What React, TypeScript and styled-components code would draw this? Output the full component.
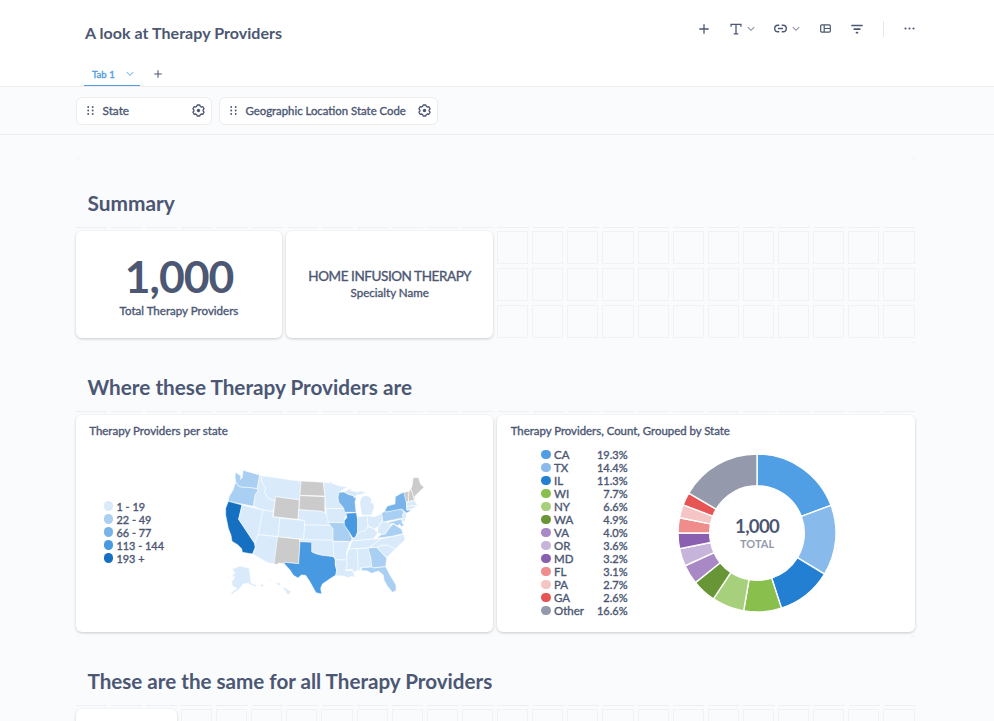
import React from 'react';
import styled, { createGlobalStyle, css } from 'styled-components';

const ink = '#4c5773';
const brand = '#509ee3';
const line = '#eeecec';
const canvas = '#f9fbfd';

const GlobalStyle = createGlobalStyle`
  * { box-sizing: border-box; }
  body {
    margin: 0;
    background: ${canvas};
    color: ${ink};
    font-family: Lato, sans-serif;
    font-weight: 700;
    overflow: hidden;
  }
  svg { display: block; flex: none; }
`;

/* Medium weight for small labels, between Lato Regular and Lato Bold. */
const medium = css`
  font-weight: 400;
  -webkit-text-stroke: 0.36px currentColor;
`;

const Page = styled.div`
  width: 994px;
  height: 721px;
  overflow: hidden;
`;

const Header = styled.header`
  height: 87px;
  padding: 0 69px 0 84px;
  background: #fff;
  border-bottom: 1px solid ${line};
  display: flex;
  flex-direction: column;
  justify-content: space-between;
`;

const TitleBar = styled.div`
  display: flex;
  justify-content: space-between;
  padding-top: 18px;
`;

const Title = styled.h1`
  margin: 4px 0 0 1px;
  font-size: 16px;
  letter-spacing: 0.04px;
  line-height: 21px;
`;

const Toolbar = styled.div`
  display: flex;
  align-items: center;
  height: 21px;
`;

const ToolButton = styled.button<{ $width: number }>`
  display: flex;
  align-items: center;
  justify-content: center;
  gap: 5px;
  width: ${(p) => p.$width}px;
  height: 21px;
  padding: 0;
  border: 0;
  background: none;
  color: ${ink};
`;

const Divider = styled.div`
  width: 1px;
  height: 16px;
  background: #e6e6e9;
  margin: 0 9px 0 15px;
`;

const Tabs = styled.nav`
  display: flex;
  height: 23px;
`;

const Tab = styled.div`
  display: flex;
  justify-content: space-between;
  align-items: center;
  width: 56px;
  padding: 0 6px 0 8px;
  border-bottom: 1px solid ${brand};
  color: ${brand};
  font-size: 9.6px;
  ${medium}
`;

const AddTab = styled.div`
  display: flex;
  align-items: center;
  height: 21px;
  margin-left: 13.5px;
`;

const Filters = styled.div`
  display: flex;
  gap: 7px;
  height: 48px;
  padding: 10px 76px;
  border-bottom: 1px solid ${line};
`;

const FilterPill = styled.div<{ $width: number }>`
  display: flex;
  align-items: center;
  width: ${(p) => p.$width}px;
  height: 28px;
  padding: 0 6px 1px 9.5px;
  border: 1px solid ${line};
  border-radius: 6px;
  background: #fff;
`;

const FilterName = styled.span<{ $size: number }>`
  flex: 1;
  margin-left: 9px;
  font-size: ${(p) => p.$size}px;
  line-height: 16px;
  white-space: nowrap;
  ${medium}
`;

const Board = styled.main`
  display: grid;
  grid-template-columns: repeat(24, 31.125px);
  grid-auto-rows: 32.75px;
  gap: 4px;
  margin: 22.9px 0 0 75.6px;
`;

const Cell = styled.div`
  border: 1px solid #f1f2f4;
`;

const Heading = styled.h2<{ $size: number }>`
  grid-column: 1 / span 24;
  grid-row-end: span 2;
  margin: 0 0 -1px;
  padding: 31.4px 0 0 11.9px;
  font-size: ${(p) => p.$size}px;
  line-height: 28px;
  background:
    repeating-linear-gradient(90deg, #eff0f3 0 31.125px, transparent 31.125px 35.125px) 0 100% / 100% 1px no-repeat,
    linear-gradient(#f3f4f6, #f3f4f6) 0 0 / 4px 1px no-repeat,
    linear-gradient(#f3f4f6, #f3f4f6) 100% 0 / 4px 1px no-repeat;
`;

const Card = styled.section<{ $cols: number; $rows: number }>`
  grid-column-end: span ${(p) => p.$cols};
  grid-row-end: span ${(p) => p.$rows};
  background: #fff;
  border-radius: 6px;
  box-shadow: 0 1px 3px rgba(0, 0, 0, 0.2);
  min-width: 0;
`;

const Metric = styled(Card)`
  display: flex;
  flex-direction: column;
  align-items: center;
  padding-top: 21px;
`;

const BigNumber = styled.div`
  font-size: 44.5px;
  letter-spacing: -1.05px;
  line-height: 48px;
`;

const Value = styled.div`
  padding-top: 15px;
  font-size: 13.5px;
  letter-spacing: -0.43px;
  line-height: 19px;
  ${medium}
`;

const Label = styled.div<{ $top: number }>`
  padding-top: ${(p) => p.$top}px;
  font-size: 11.55px;
  line-height: 14px;
  ${medium}
`;

const CardTitle = styled.h3<{ $size: number }>`
  margin: 0;
  padding: 8.5px 13.6px 0;
  font-size: ${(p) => p.$size}px;
  line-height: 14px;
  ${medium}
`;

const ChartRow = styled.div`
  display: flex;
  align-items: flex-start;
`;

const MapLegend = styled.ul`
  list-style: none;
  margin: 0;
  padding: 62.5px 0 0 28.4px;
  width: 139.4px;
`;

const PieLegend = styled.ul`
  list-style: none;
  margin: 0;
  padding: 10.8px 0 0 44.4px;
  width: 172px;
`;

const LegendItem = styled.li<{ $size: number }>`
  display: flex;
  align-items: center;
  height: 13px;
  gap: 3px;
  font-size: ${(p) => p.$size}px;
  line-height: 13px;
  ${medium}
`;

const Dot = styled.span<{ $color: string }>`
  width: 9.5px;
  height: 9.5px;
  margin-top: -1px;
  border-radius: 50%;
  background: ${(p) => p.$color};
`;

const Percent = styled.span`
  flex: 1;
  padding-right: 41.5px;
  text-align: right;
  font-size: 11.05px;
`;

const MapSvg = styled.svg`
  margin-top: 22.35px;
`;

const PieSvg = styled.svg`
  margin: 15px 0 0 8.2px;
`;

const Chevron = ({ color = '#8a92a5' }: { color?: string }) => (
  <svg width="8" height="6" viewBox="0 0 8 6" fill="none" stroke={color} strokeWidth="1.1">
    <path d="M.8 1.1 4 4.3 7.2 1.1" />
  </svg>
);

const Plus = ({ size }: { size: number }) => (
  <svg width={size} height={size} viewBox="0 0 10 10" fill="none" stroke={ink} strokeWidth="1.3">
    <path d="M5 .3v9.4M.3 5h9.4" />
  </svg>
);

const Grip = () => (
  <svg width="7" height="9" viewBox="0 0 7 9" fill={ink}>
    {[1, 4.5, 8].map((y) => (
      <g key={y}>
        <circle cx="1.2" cy={y} r=".95" />
        <circle cx="5.7" cy={y} r=".95" />
      </g>
    ))}
  </svg>
);

const Gear = () => (
  <svg width="13" height="13" viewBox="0 0 13 13" fill="none" stroke={ink}>
    <path
      strokeWidth="1.3"
      strokeLinejoin="round"
      d="M5.2 1h2.600l.5 1.400 1.100.6 1.500-.3 1.200 2.200-1 1.100v1l1 1.100-1.200 2.200-1.500-.3-1.100.6-.5 1.400H5.200l-.5-1.400-1.100-.6-1.500.3L.9 8.100l1-1.100V6l-1-1.100 1.200-2.200 1.500.3 1.100-.6z"
    />
    <circle cx="6.500" cy="6.500" r="1.700" fill={ink} stroke="none" />
  </svg>
);

type State = [fill: string, points: string];
const c1 = '#d9eafb';
const c2 = '#a9cff3';
const c3 = '#78b3ea';
const c4 = '#4799e2';
const c5 = '#1670c1';
const none = '#cbcbcb';

const states: State[] = [
  [c2, '62,37 78,48 76,59 82,52 84,31 134,45 127,86 97,82 80,82 70,78 62,66 60,50'],
  [c2, '62,66 70,78 80,82 97,82 127,86 129,92 121,104 115,139 40,124 42,110 54,90'],
  [c5, '40,124 81,135 71,178 119,250 121,262 113,282 82,277 80,266 68,254 51,244 48,226 40,205 36,185 32,165 32,145'],
  [c1, '81,135 144,150 130,224 125,236 119,250 71,178'],
  [c1, '134,45 141,47 139,62 152,84 149,98 160,115 180,122 175,155 144,150 115,139 121,104 129,92 127,86'],
  [c1, '141,47 258,64 255,120 182,110 180,122 160,115 149,98 152,84 139,62'],
  [none, '182,110 253,120 249,178 175,170'],
  [c1, '144,150 175,155 173,170 195,174 189,230 130,224'],
  [c1, '130,224 189,230 178,312 158,308 113,282 121,262 119,250 125,236'],
  [none, '188,230 255,238 251,311 208,307 208,311 190,309 188,313 177,312'],
  [c1, '195,174 269,182 266,238 189,230'],
  [none, '258,63 325,67 330,108 255,106'],
  [none, '255,107 330,110 329,140 330,158 318,154 252,149'],
  [c1, '252,149 318,154 331,158 338,172 343,189 347,196 269,195 269,182 249,178'],
  [c1, '269,195 347,196 354,207 354,241 266,239'],
  [c1, '255,238 354,241 357,262 357,291 340,288 320,286 290,276 290,247 255,245'],
  [c4, '255,245 290,247 290,276 305,282 320,286 340,288 357,291 361,300 361,315 365,330 363,345 345,356 322,372 317,385 320,402 303,398 294,382 283,362 272,346 259,345 249,354 235,346 225,330 208,311 208,307 251,311'],
  [c1, '325,67 345,69 346,60 350,70 375,78 398,81 380,91 372,97 369,112 371,126 389,146 332,146 330,110'],
  [c1, '332,146 387,146 396,160 391,172 386,188 340,188 335,165'],
  [c2, '340,188 386,188 392,200 402,215 411,236 406,247 398,247 398,244 354,244 354,207'],
  [c1, '354,244 405,245 401,258 394,278 395,300 361,299 357,290'],
  [c1, '361,299 395,300 397,315 392,332 412,332 416,340 420,352 408,349 400,353 385,348 362,347 365,330 361,315'],
  [c3, '372,97 388,96 400,103 416,107 418,113 424,112 420,125 423,157 389,157 386,144 371,126 369,112'],
  [c4, '393,160 424,158 428,180 428,215 420,236 412,232 402,215 388,195 388,182 396,172'],
  [c1, '388,96 397,90 408,83 406,91 425,96 440,93 453,98 440,103 425,105 418,112 416,107 400,103'],
  [c1, '440,166 437,145 434,128 438,115 446,107 460,108 470,117 468,130 475,128 478,140 472,157 470,165'],
  [c1, '428,170 457,167 459,198 450,212 428,222'],
  [c1, '457,167 480,170 500,160 502,180 490,200 478,207 459,198'],
  [c1, '412,238 422,230 428,218 450,212 460,200 478,207 488,218 476,236 412,243'],
  [c1, '410,246 412,243 476,237 498,236 478,252 462,263 402,267'],
  [c1, '402,267 427,266 430,332 414,335 412,328 392,330 397,314 395,300 397,278'],
  [c1, '427,266 459,264 468,295 470,320 437,323 437,332 430,332'],
  [c2, '459,264 485,262 497,275 515,295 512,320 475,323 470,320 468,295'],
  [c2, '440,323 470,321 475,324 512,320 525,345 543,375 543,392 532,397 517,378 507,360 505,345 490,333 470,340 455,332 440,332'],
  [c1, '485,262 503,255 520,256 540,268 515,293 497,275'],
  [c1, '498,236 567,223 570,240 553,255 540,268 520,256 503,255 485,262 462,263 478,252'],
  [c2, '486,235 500,223 510,222 522,205 535,192 548,200 560,208 564,221 530,229'],
  [c1, '490,200 502,183 515,187 532,188 522,205 510,222 500,223 487,218'],
  [c2, '500,160 510,152 512,156 558,146 567,156 562,168 567,173 504,186'],
  [c2, '518,188 560,177 562,190 568,194 560,200 553,192 548,198 535,190 522,192'],
  [c1, '560,148 574,154 573,172 567,188 560,178 567,173 562,168 567,156'],
  [c3, '510,151 517,138 540,132 541,110 562,98 568,97 574,120 575,150 590,151 575,159 560,147 512,156'],
  [none, '566,97 583,94 580,110 581,125 574,126'],
  [none, '583,94 588,86 599,120 581,125 580,110'],
  [none, '588,86 592,74 594,55 602,52 611,53 616,72 627,82 612,96 600,108 598,118'],
  [c1, '575,127 598,121 603,130 609,133 600,137 575,138'],
  [c1, '575,138 600,137 600,143 577,151'],
  [c1, '52,327 75,318 103,325 108,368 124,376 123,381 98,370 85,372 72,388 52,402 45,401 66,385 52,378 50,365 60,350 48,350 60,338'],
  [c1, '203,384 208,382 229,395 220,404 216,403 212,393'],
  [c1, '183,368 194,369 198,375 190,376'],
  [c1, '163,359 168,360 166,364 162,363'],
  [c1, '133,374 143,373 147,379 140,380'],
  [c1, '38,352 44,350 43,354 37,354'],
];

const MapChart = () => (
  <MapSvg width="220" height="145" viewBox="0 0 660 435" stroke="#fff" strokeWidth="1.6" strokeLinejoin="round">
    {states.map(([fill, points]) => (
      <polygon key={points} fill={fill} points={points} />
    ))}
  </MapSvg>
);

const slices: [string, number, string][] = [
  ['CA', 19.3, '#509ee3'],
  ['TX', 14.4, '#88bbeb'],
  ['IL', 11.3, '#227fd2'],
  ['WI', 7.7, '#88bf4d'],
  ['NY', 6.6, '#a7d07c'],
  ['WA', 4.9, '#689636'],
  ['VA', 4.0, '#a989c5'],
  ['OR', 3.6, '#c7b4db'],
  ['MD', 3.2, '#8a5eb0'],
  ['FL', 3.1, '#ef8c8c'],
  ['PA', 2.7, '#f5c4c4'],
  ['GA', 2.6, '#e75454'],
  ['Other', 16.6, '#949aab'],
];

const total = slices.reduce((sum, s) => sum + s[1], 0);
const polar = (r: number, t: number) =>
  `${(80 + r * Math.sin(t * 2 * Math.PI)).toFixed(2)} ${(80 - r * Math.cos(t * 2 * Math.PI)).toFixed(2)}`;

const PieTotal = styled.text`
  font-size: 18.6px;
  letter-spacing: -0.7px;
  text-anchor: middle;
  fill: ${ink};
`;

const PieCaption = styled.text`
  font-size: 11px;
  text-anchor: middle;
  fill: #949aab;
`;

const PieChart = () => {
  let at = 0;
  return (
    <PieSvg width="160" height="160" viewBox="0 0 160 160">
      {slices.map(([name, value, color]) => {
        const from = at / total;
        at += value;
        const to = at / total;
        return (
          <path
            key={name}
            fill={color}
            stroke="#fff"
            strokeWidth="1.4"
            d={`M${polar(79, from)}A79 79 0 0 1 ${polar(79, to)}L${polar(47.3, to)}A47.3 47.3 0 0 0 ${polar(47.3, from)}Z`}
          />
        );
      })}
      <PieTotal x="80.1" y="79.8">1,000</PieTotal>
      <PieCaption x="80.1" y="94.9">TOTAL</PieCaption>
    </PieSvg>
  );
};

const buckets: [string, string][] = [
  ['1 - 19', c1],
  ['22 - 49', c2],
  ['66 - 77', c3],
  ['113 - 144', c4],
  ['193 +', c5],
];

const cells = (count: number, prefix: string) =>
  Array.from({ length: count }, (_, i) => <Cell key={prefix + i} />);

export default function App() {
  return (
    <Page>
      <GlobalStyle />
      <Header>
        <TitleBar>
          <Title>A look at Therapy Providers</Title>
          <Toolbar>
            <ToolButton $width={24} aria-label="Add question"><Plus size={10} /></ToolButton>
            <ToolButton $width={53} aria-label="Add text">
              <svg width="12" height="12" viewBox="0 0 12 12" fill="none" stroke={ink} strokeWidth="1.3">
                <path d="M1.1 3.700V1.300h9.800v2.400M6 1.300v9.500M3.800 10.900h4.400" />
              </svg>
              <Chevron />
            </ToolButton>
            <ToolButton $width={35} aria-label="Add link">
              <svg width="13" height="9" viewBox="0 0 13 9" fill="none" stroke={ink} strokeWidth="1.4">
                <path d="M5.300 1.200H4a3.300 3.300 0 0 0 0 6.600h1.300M7.700 1.200H9a3.300 3.300 0 0 1 0 6.600H7.700M4 4.500h5" />
              </svg>
              <Chevron />
            </ToolButton>
            <ToolButton $width={42} aria-label="Add section">
              <svg width="11" height="9" viewBox="0 0 11 9" fill="none" stroke={ink} strokeWidth="1.2">
                <rect x=".7" y=".9" width="9.600" height="7.200" rx="1" />
                <path d="M4.200 1v7M4.200 4.500h6" />
              </svg>
            </ToolButton>
            <ToolButton $width={22} aria-label="Add filter">
              <svg width="12" height="10" viewBox="0 0 12 10" fill="none" stroke={ink} strokeWidth="1.700" strokeLinecap="round">
                <path d="M1 1.500h10M3.200 5.100h5.600M5.500 8.700h1" />
              </svg>
            </ToolButton>
            <Divider />
            <ToolButton $width={32} aria-label="More">
              <svg width="11" height="3" viewBox="0 0 11 3" fill={ink}>
                <circle cx="1.500" cy="1.500" r="1.050" />
                <circle cx="5.500" cy="1.500" r="1.050" />
                <circle cx="9.500" cy="1.500" r="1.050" />
              </svg>
            </ToolButton>
          </Toolbar>
        </TitleBar>
        <Tabs>
          <Tab>Tab 1<Chevron color="#86bdec" /></Tab>
          <AddTab><Plus size={8} /></AddTab>
        </Tabs>
      </Header>
      <Filters>
        <FilterPill $width={136}><Grip /><FilterName $size={11.8}>State</FilterName><Gear /></FilterPill>
        <FilterPill $width={219}><Grip /><FilterName $size={11.36}>Geographic Location State Code</FilterName><Gear /></FilterPill>
      </Filters>
      <Board>
        <Heading $size={20.85}>Summary</Heading>
        <Metric $cols={6} $rows={3}>
          <BigNumber>1,000</BigNumber>
          <Label $top={4}>Total Therapy Providers</Label>
        </Metric>
        <Metric $cols={6} $rows={3}>
          <Value>HOME INFUSION THERAPY</Value>
          <Label $top={0}>Specialty Name</Label>
        </Metric>
        {cells(36, 'summary')}
        <Heading $size={20.72}>Where these Therapy Providers are</Heading>
        <Card $cols={12} $rows={6}>
          <CardTitle $size={11.5}>Therapy Providers per state</CardTitle>
          <ChartRow>
            <MapLegend>
              {buckets.map(([label, color]) => (
                <LegendItem key={label} $size={10.9}><Dot $color={color} />{label}</LegendItem>
              ))}
            </MapLegend>
            <MapChart />
          </ChartRow>
        </Card>
        <Card $cols={12} $rows={6}>
          <CardTitle $size={11.4}>Therapy Providers, Count, Grouped by State</CardTitle>
          <ChartRow>
            <PieLegend>
              {slices.map(([name, value, color]) => (
                <LegendItem key={name} $size={11.5}>
                  <Dot $color={color} />{name}<Percent>{value.toFixed(1)}%</Percent>
                </LegendItem>
              ))}
            </PieLegend>
            <PieChart />
          </ChartRow>
        </Card>
        <Heading $size={20.62}>These are the same for all Therapy Providers</Heading>
        <Card $cols={3} $rows={1} />
        {cells(21, 'shared')}
      </Board>
    </Page>
  );
}
